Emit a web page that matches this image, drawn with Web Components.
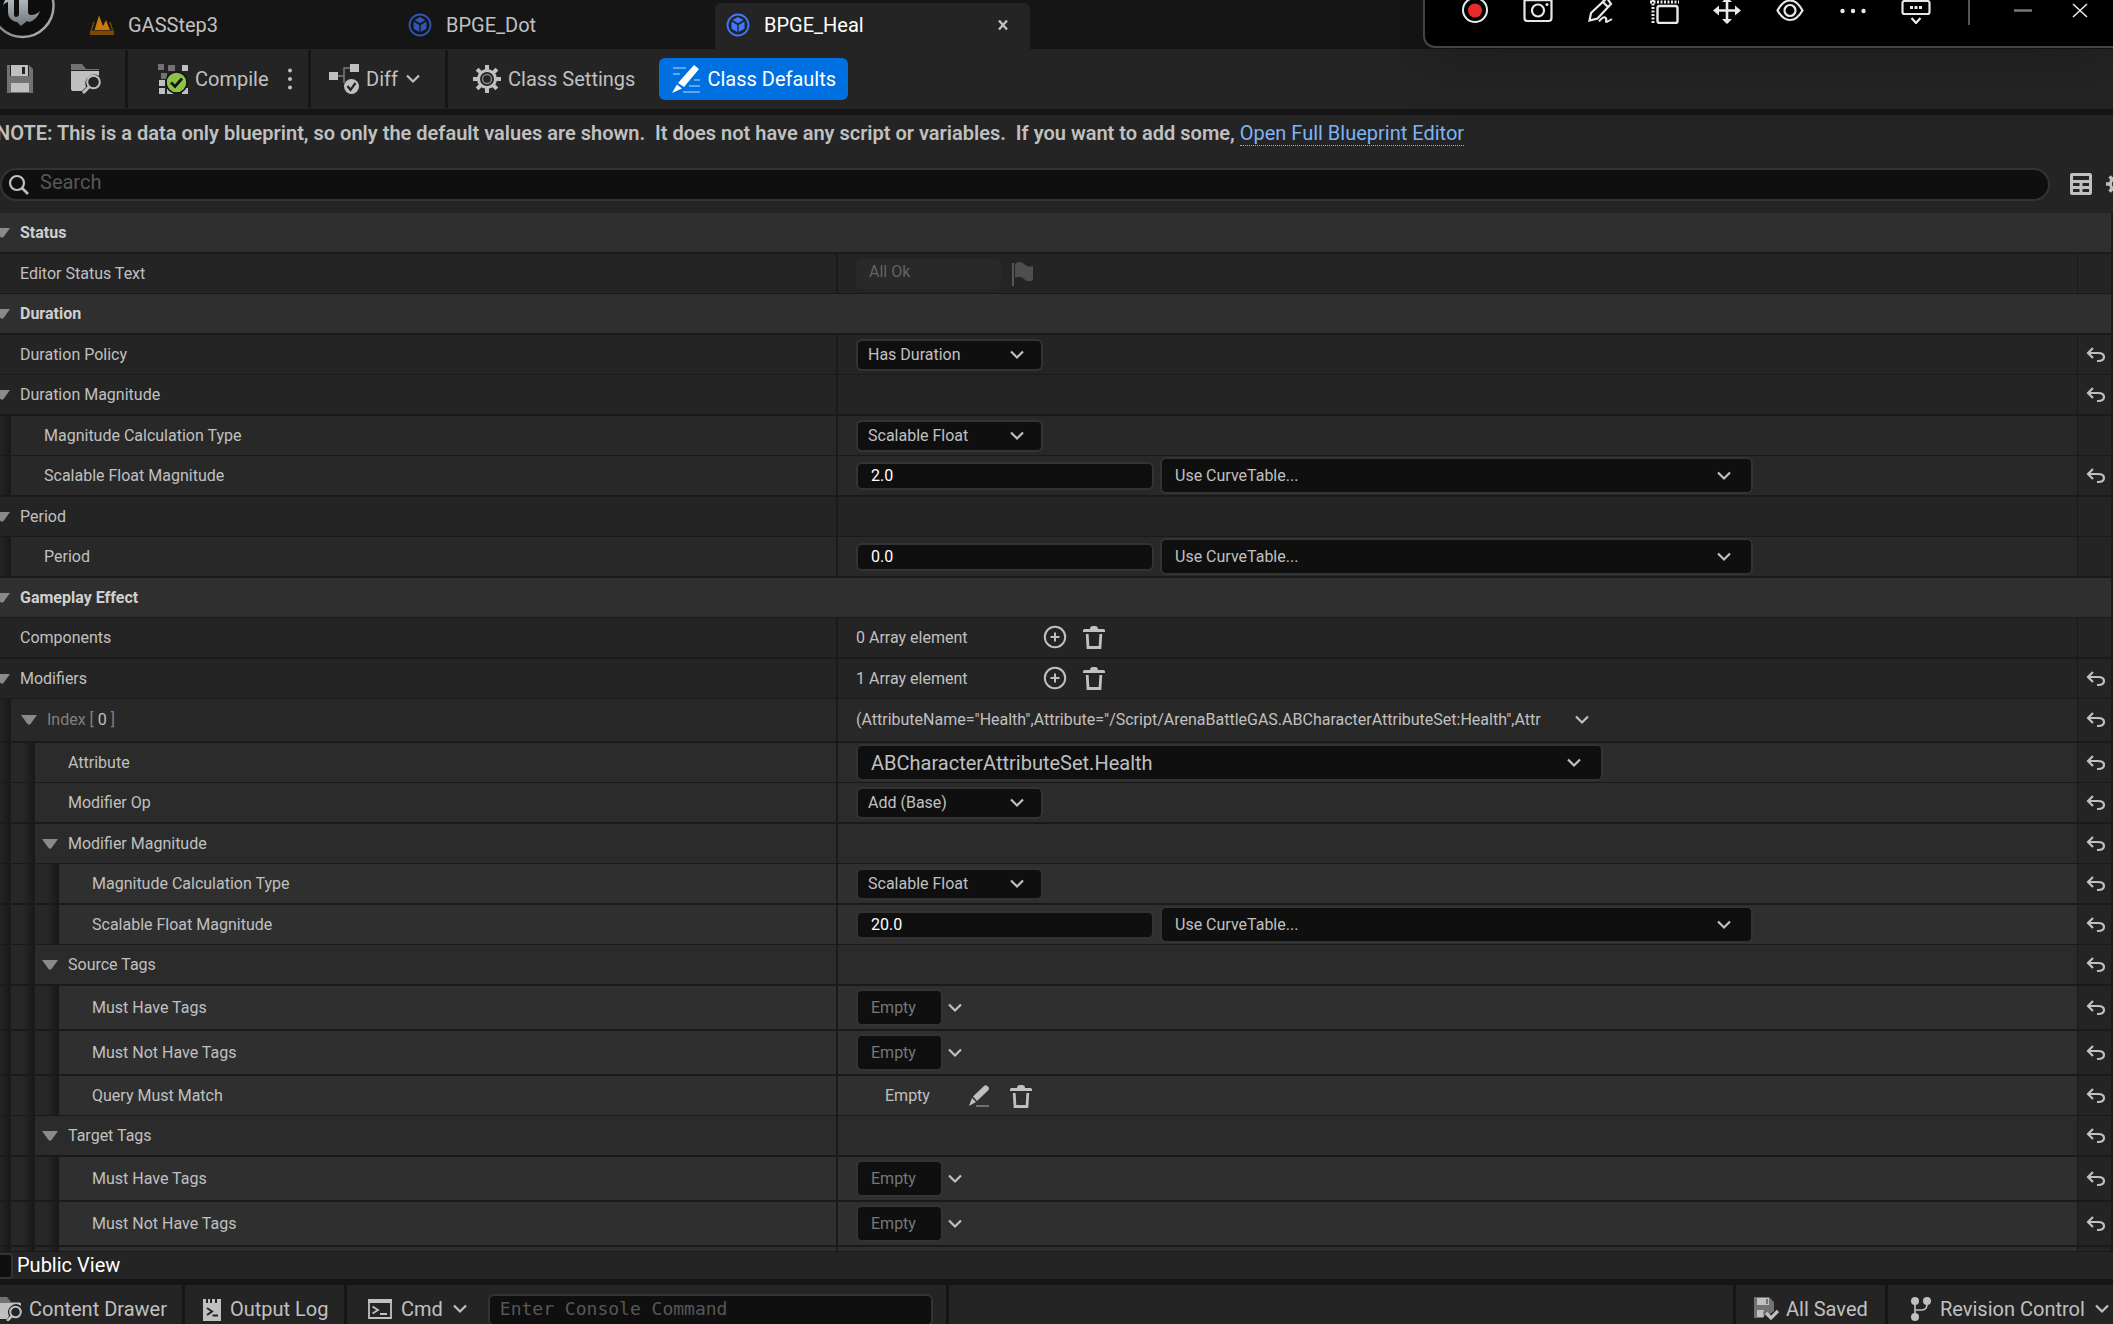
<!DOCTYPE html>
<html lang="en">
<head>
<meta charset="utf-8">
<title>BPGE_Heal</title>
<style>
html, body { margin: 0; height: 100%; background: #151515; overflow: hidden; }
body { font-family: Roboto, "Liberation Sans", sans-serif; font-size: 20px; color: #c0c0c0; }
</style>
</head>
<body>
<blueprint-editor></blueprint-editor>
<script>
const ICONS = {
  logo: ['56 40', `<defs><linearGradient id="rim" x1="0" y1="0" x2="1" y2="1"><stop offset="0" stop-color="#555"/><stop offset="1" stop-color="#b5b8ba"/></linearGradient><linearGradient id="u" x1="0" y1="0" x2="0" y2="1"><stop offset="0" stop-color="#c4c9cc"/><stop offset="1" stop-color="#6f7578"/></linearGradient></defs><circle cx="22.500" cy="6" r="31" fill="#0d0d0d" stroke="url(#rim)" stroke-width="2.500"/><path fill="url(#u)" d="M3 6C4 0 8-6 14-8v22q0 3 2 3t3-2V-8h9v20q0 3 3 3 5 0 9-4-3 9-11 11l-2-1-6 5-4-4q-5-1-7-4-2-2-2-6V2Q4 3 3 6z"/>`],
  level: ['24 20', `<path fill="#c97a08" d="M4.500 15 9 0.500 13 11l3-6 4 10z"/><path fill="#7a4a08" d="M0 15.500h24V20H0z"/><path d="M4 7 1.500 15M20 7l2.500 8" stroke="#7a4a08" stroke-width="1.300"/>`],
  blueprint: ['24 24', `<circle cx="12" cy="12" r="10.500" fill="none" stroke="currentColor" stroke-width="1.800"/><path fill="currentColor" d="M12 4 17.500 7 12 10.300 6.500 7zM5.500 8.600 11.300 12v7L5.500 15.800zM18.500 8.600 12.700 12v7l5.800-3.200z"/>`],
  close: ['12 12', `<path d="M2 1.500 10 10.500M10 1.500 2 10.500" stroke="currentColor" stroke-width="2.400"/>`],
  save: ['26 28', `<path fill="currentColor" d="M0 0h3v11h19V0l4 4v24H0z" opacity=".5"/><path fill="currentColor" fill-rule="evenodd" d="M4 0h17v11H4zm11 2v7h3V2zM4 18h18v9H4z"/>`],
  folder: ['30 30', `<path fill="currentColor" opacity=".5" d="M0 0h11l4 5h13v1H0z"/><path fill="currentColor" d="M0 7h28v5a9 9 0 0 0-13 11l-4 4H2q-2 0-2-2z"/><circle cx="22.500" cy="18" r="6.300" fill="none" stroke="currentColor" stroke-width="2"/><path d="M18 23 12 29" stroke="currentColor" stroke-width="3"/>`],
  drawer: ['22 24', `<path fill="currentColor" opacity=".5" d="M0 0h7l4 5h9v1H0z"/><path fill="currentColor" d="M0 6h21v3a8 8 0 0 0-12 10l-2 3H0z"/><circle cx="15.500" cy="15" r="5.300" fill="none" stroke="currentColor" stroke-width="2"/><path d="M12 19 7 24" stroke="currentColor" stroke-width="2.500"/>`],
  compile: ['30 30', `<g fill="#c0c0c0"><path d="M24 1h6v6h-6zM1 16h6v6H1zM1 24h6v6H1zM9 24h6v6H9zM24 24h6v6h-6z"/><path opacity=".5" d="M0 0h6v6H0zM10 1h7v6h-7zM3 9h6v6H3z"/></g><circle cx="18.500" cy="18.500" r="10.500" fill="#8bc34a" stroke="#151515" stroke-width="1.500"/><path d="M13 18.500l4 4 7-8" fill="none" stroke="#151515" stroke-width="2.800"/>`],
  dots: ['4 22', `<g fill="currentColor"><circle cx="2" cy="2.500" r="2"/><circle cx="2" cy="11" r="2"/><circle cx="2" cy="19.500" r="2"/></g>`],
  diff: ['30 30', `<path d="M8 12h7V4h7M15 12v7" fill="none" stroke="currentColor" opacity=".55" stroke-width="1.500"/><path fill="currentColor" d="M0 8h9v8H0zM21 0h9v8h-9z"/><circle cx="22.500" cy="22.500" r="7.500" fill="currentColor"/><path d="M18.500 22l3 4 5-7" fill="none" stroke="#242424" stroke-width="2.200"/>`],
  chev: ['16 10', `<path d="M2 1.500 8 7.500 14 1.500" fill="none" stroke="currentColor" stroke-width="2.200"/>`],
  gear: ['28 28', `<circle cx="14" cy="14" r="8.500" fill="none" stroke="currentColor" stroke-width="3"/><circle cx="14" cy="14" r="4.500" fill="none" stroke="currentColor" stroke-width="1.500" opacity=".6"/><g stroke="currentColor" stroke-width="4"><path d="M14 0v5M14 23v5M0 14h5M23 14h5M4.100 4.100 7.600 7.600M20.400 20.400l3.500 3.500M23.900 4.100 20.400 7.600M7.600 20.400l-3.500 3.500"/></g>`],
  gearsmall: ['22 22', `<circle cx="11" cy="11" r="6.500" fill="none" stroke="currentColor" stroke-width="3"/><path d="M11 0v4M11 18v4M0 11h4M18 11h4M3.500 3.500l2.500 2.500M16 16l2.500 2.500M18.500 3.500 16 6M6 16l-2.500 2.500" stroke="currentColor" stroke-width="3.400"/>`],
  defaults: ['28 28', `<g stroke="#7db8f5" stroke-width="1.500"><path d="M1 3h13M1 9h7M22 15h6M17 21h11M11 27h17"/></g><path fill="#fff" d="M22 0l5 4L12 22l-6-4zM5 19.500l5 4L0 28z"/>`],
  search: ['22 22', `<circle cx="9" cy="9" r="7" fill="none" stroke="currentColor" stroke-width="2.200"/><path d="M14 14l6 6" stroke="currentColor" stroke-width="2.600"/>`],
  grid: ['22 22', `<path fill="currentColor" fill-rule="evenodd" d="M2 0h18q2 0 2 2v18q0 2-2 2H2q-2 0-2-2V2Q0 0 2 0zM3 3v4h16V3zM3 10v3h6.500v-3zM12.500 10v3H19v-3zM3 16v3h6.500v-3zM12.500 16v3H19v-3z"/>`],
  flag: ['22 24', `<path d="M1 1v23" stroke="currentColor" stroke-width="1.800"/><path fill="currentColor" d="M3 2Q8-2 12 2t9 2v14q-5 3-9-1T3 16z" opacity=".75"/>`],
  plus: ['24 24', `<circle cx="12" cy="12" r="10.200" fill="none" stroke="currentColor" stroke-width="2"/><path d="M12 7.500v9M7.500 12h9" stroke="currentColor" stroke-width="2"/>`],
  trash: ['22 24', `<path fill="currentColor" d="M0 5.500Q0 4 1.500 4H7Q7 1 10 1h2q3 0 3 3h5.500Q22 4 22 5.500V7H0z"/><path d="M4.200 9 5 22.500h12L17.800 9" fill="none" stroke="currentColor" stroke-width="2.800"/>`],
  pencil: ['22 22', `<path fill="currentColor" d="M16 1q2-1.500 4 .5t0 4L9 16l-4-4.500zM4 13l4 4-7 4z"/><path d="M8 21h13" stroke="currentColor" opacity=".6" stroke-width="1.500"/>`],
  reset: ['20 16', `<path d="M7 1 2 6l5 5M2 6h10q6 0 6 4T12 14h-1" fill="none" stroke="currentColor" stroke-width="2.200"/>`],
  arrow: ['16 10', `<path fill="#8a8a8a" d="M0 0h16L9.500 9q-1.500 1.500-3 0z"/>`],
  log: ['18 24', `<path fill="currentColor" d="M0 2h3v4h2V2h2v4h2V2h3v4h2V2h4v22H0z"/><path d="M4 11l5 3.500L4 18M9.500 18.500H15" fill="none" stroke="#242424" stroke-width="2"/>`],
  cmd: ['24 20', `<path fill="currentColor" d="M0 0h24v4H0z"/><path d="M1 1h22v18H1z" fill="none" stroke="currentColor" stroke-width="1.800"/><path d="M4.500 7.500 10 11l-5.500 3.500M12 15h7" fill="none" stroke="currentColor" stroke-width="1.800"/>`],
  saved: ['25 24', `<path fill="currentColor" opacity=".5" d="M0 0h15l5 5v9l-5 4-3-2-3 5H0z"/><path fill="currentColor" fill-rule="evenodd" d="M3 1h12v7H3zm9 1v5h2V2zM3 13h7l-1 3 1 4H3z"/><path d="M12 16l5 5 7-7" fill="none" stroke="currentColor" stroke-width="3.200"/>`],
  branch: ['20 24', `<g fill="currentColor"><circle cx="4" cy="4" r="4"/><circle cx="16" cy="4" r="4"/><circle cx="4" cy="20" r="4"/></g><path d="M4 5v14M4 13h7q5 0 5-6" fill="none" stroke="currentColor" stroke-width="1.600"/>`],
  record: ['28 24', `<circle cx="14" cy="10" r="12" fill="none" stroke="#e8e8e8" stroke-width="2"/><circle cx="14" cy="10.500" r="7" fill="#e82a2a"/>`],
  camera: ['30 24', `<path d="M1.500 0v18q0 3 3 3h21q3 0 3-3V0" fill="none" stroke="currentColor" stroke-width="2.200"/><path d="M2 .500h26" stroke="currentColor" stroke-width="1.500"/><circle cx="15" cy="10.500" r="6" fill="none" stroke="currentColor" stroke-width="2.200"/><circle cx="24" cy="4.500" r="1.500" fill="currentColor"/>`],
  draw: ['28 24', `<path d="M20-2 4 13 2.500 20.500l8-2L24 4 20-2M15 1l6 6" fill="none" stroke="currentColor" stroke-width="2.200"/><path d="M12 21.500q4-5 6-4t1 3.500 6-2" fill="none" stroke="currentColor" stroke-width="2"/>`],
  crop: ['30 24', `<path d="M1 2h29M4 0v24" fill="none" stroke="currentColor" stroke-width="3" stroke-dasharray="2 1.500"/><rect x="8.500" y="6" width="20" height="17" rx="2" fill="#000" stroke="currentColor" stroke-width="2.400"/>`],
  move: ['28 24', `<path d="M14-2v25M2 10.500h24" stroke="currentColor" stroke-width="2.600"/><path fill="currentColor" d="M9 19h10l-5 5zM9 2h10l-5-5zM6 5.500v10L0 10.500zM22 5.500v10l6-5z"/>`],
  eye: ['28 24', `<path d="M1.500 10.500Q7 .500 14 .500t12.500 10Q21 20 14 20T1.500 10.500z" fill="none" stroke="currentColor" stroke-width="2.200"/><circle cx="14" cy="10.500" r="5.500" fill="none" stroke="currentColor" stroke-width="2.200"/>`],
  more: ['28 24', `<g fill="currentColor"><circle cx="3.500" cy="11" r="2.200"/><circle cx="14" cy="11" r="2.200"/><circle cx="24.500" cy="11" r="2.200"/></g>`],
  keys: ['30 24', `<rect x="1.500" y="1" width="27" height="13" rx="2" fill="none" stroke="currentColor" stroke-width="2.200"/><g fill="currentColor"><path d="M9 6h3v3H9zM13.500 6h3v3h-3zM18 6h3v3h-3z"/></g><path d="M10.500 18l4.500 5 4.500-5" fill="none" stroke="currentColor" stroke-width="2.200"/>`],
  minus: ['20 24', `<path d="M1 10.500h18" stroke="#777" stroke-width="2.500"/>`],
  cross: ['16 24', `<path d="M1 4l14 13M15 4 1 17" stroke="currentColor" stroke-width="1.600"/>`]
};
const icon = n => `<ue-icon name="${n}"></ue-icon>`;

class UeIcon extends HTMLElement {
  connectedCallback() {
    const [size, body] = ICONS[this.getAttribute('name')];
    const [w, h] = size.split(' ');
    this.attachShadow({ mode: 'open' }).innerHTML =
      `<style>:host{display:inline-flex;flex:none}svg{display:block}</style><svg width="${w}" height="${h}" viewBox="0 0 ${w} ${h}" aria-hidden="true">${body}</svg>`;
  }
}
customElements.define('ue-icon', UeIcon);

const define = (name, html) => {
  const t = document.createElement('template');
  customElements.define(name, class extends HTMLElement {
    constructor() {
      super();
      if (!t.innerHTML) t.innerHTML = html;
      this.attachShadow({ mode: 'open' }).append(document.importNode(t.content, true));
    }
  });
};

define('editor-tab', `<style>
:host{display:block;width:315px}
button{display:flex;align-items:center;gap:14px;width:100%;height:46px;padding:0 21px 2px 11px;border:0;border-radius:6px 6px 0 0;background:none;color:inherit;font:inherit;text-align:left}
:host([active]) button{background:#242424;color:#fff}
.t{flex:1}
slot[name=close]{color:#c0c0c0}
</style><button type="button"><slot name="icon"></slot><span class="t"><slot></slot></span><slot name="close"></slot></button>`);

define('tool-button', `<style>
:host{display:block}
button{display:flex;align-items:center;gap:7px;height:42px;padding:0;border:0;border-radius:6px;background:none;color:inherit;font:inherit;white-space:nowrap}
:host([primary]) button{background:#0070e0;color:#fff;padding:0 12px 0 13px}
:host([wide]) button{gap:9px}
.t{display:contents}
</style><button type="button"><slot></slot></button>`);

define('bar-group', `<style>
:host{display:flex;align-items:center;box-sizing:border-box;border-right:3px solid #161616}
:host([last]){border-right:0}
</style><slot></slot>`);

define('capture-bar', `<style>
:host{position:absolute;top:0;right:0;display:flex;align-items:flex-start;box-sizing:border-box;height:48px;padding:0 5px 0 18px;background:#000;border:solid #444;border-width:0 0 2px 2px;border-radius:0 0 0 12px;box-shadow:0 0 64px rgba(0,0,0,.35);color:#e8e8e8}
button{display:flex;justify-content:center;width:63px;padding:0;border:0;background:none;color:inherit}
i{width:2px;height:25px;background:#555;margin:0 24px 0 21px}
i~button{width:57px}
</style>
${[['record','Record'],['camera','Capture'],['draw','Draw'],['crop','Select area'],['move','Move'],['eye','Show'],['more','More'],['keys','Dock']].map(b => `<button type="button" aria-label="${b[1]}">${icon(b[0])}</button>`).join('')}<i></i><button type="button" aria-label="Minimize">${icon('minus')}</button><button type="button" aria-label="Close">${icon('cross')}</button>`);

class DetailRow extends HTMLElement {
  connectedCallback() {
    const a = n => this.getAttribute(n);
    const depth = +(a('depth') || 0), kind = a('kind') || '', value = a('value') || '';
    const sel = (cls, v, id) => `<span class="sel ${cls}"><select ${id ? 'id="c"' : 'aria-label="Curve table"'}><option>${v}</option></select>${icon('chev')}</span>`;
    const btn = (n, l) => `<button type="button" aria-label="${l}">${icon(n)}</button>`;
    const views = {
      status: () => `<input id="c" class="ro" value="${value}" disabled><span class="flag">${icon('flag')}</span>`,
      select: () => sel('short', value, true),
      attr: () => sel('attr', value, true),
      number: () => `<input id="c" class="num" value="${value}">${sel('curve', 'Use CurveTable...', false)}`,
      array: () => `<span class="count">${value}</span>${btn('plus', 'Add element')}${btn('trash', 'Remove all')}`,
      struct: () => `<span class="struct"><slot></slot></span>${btn('chev', 'Element options')}`,
      tags: () => `<button id="c" type="button" class="empty">Empty</button>${btn('chev', 'Edit tags')}`,
      query: () => `<span class="q">Empty</span>${btn('pencil', 'Edit query')}${btn('trash', 'Clear query')}`
    };
    const tied = /status|select|attr|number|tags/.test(kind);
    const text = kind === 'struct' ? `<span class="idx">Index [ <b>0</b> ]</span>` : a('label');
    this.attachShadow({ mode: 'open' }).innerHTML = `<style>
:host{display:grid;grid-template-columns:836fr 1242fr 33px;min-height:39px;border-bottom:1px solid #1a1a1a;font-size:16px;line-height:20px;--bg:${['#242424', '#282828', '#2b2b2b', '#2f2f2f'][depth]};background:#242424}
:host(:nth-child(odd)),:host([kind=tags]){border-bottom-width:2px}
:host([kind=struct]){min-height:42px}
:host([kind=tags]){min-height:43px}
:host([head]){--bg:#2f2f2f;display:flex;font-weight:700;color:#d0d0d0}
:host([head]) .name{flex:1}
:host([head]) .val,:host([head]) .rst{display:none}
.name{display:flex;align-items:stretch;background:var(--bg);min-width:0}
.g{flex:none;width:24px;background:linear-gradient(90deg,transparent 50%,#1a1a1a 90%),#272727}
.g:first-child{width:11px;background:linear-gradient(90deg,#242424,#1a1a1a 80%)}
.fold{display:flex;align-items:center;justify-content:flex-end;flex:none;width:${depth ? 23 : 10}px;margin-right:10px;padding:0;border:0;background:none}
:host([kind=struct]) .fold{width:26px}
label,.lbl{display:flex;align-items:center}
.idx{color:#808080;white-space:pre}.idx b{font-weight:400;color:#c0c0c0}
.val{display:flex;align-items:center;background:var(--bg);border-left:2px solid #1a1a1a;border-right:1px solid #1a1a1a;padding-left:18px;min-width:0}
.rst{display:flex;align-items:center;justify-content:center;padding:0 0 0 2px;border:0;background:none;color:#c0c0c0}
.val button{display:flex;padding:0;border:0;background:none;color:#c0c0c0}
input,select,.val .empty{box-sizing:border-box;border:2px solid #333;border-radius:6px;background:#0f0f0f;color:#c0c0c0;font:inherit;line-height:20px}
.num{width:298px;height:28px;padding:0 13px;color:#fff;margin-right:6px}
.ro{width:145px;height:30px;padding:0 11px 4px;border-color:#292929;background:#292929;color:#636363}
.flag{display:flex;margin-left:11px;color:#5c5c5c}
.sel{display:grid;align-items:center;flex:none}
.sel>*{grid-area:1/1}
.sel ue-icon{justify-self:end;pointer-events:none}
select{width:100%;height:37px;padding:0 13px;appearance:none}
.short{width:187px}.short select{height:32px;padding:0 10px}.short ue-icon{margin-right:18px}
.curve{width:593px}.curve ue-icon{margin-right:21px}
.attr{width:747px;font-size:20px}.attr ue-icon{margin-right:21px}
.count{width:187px}.count+button{margin-right:16px}.val .count~button{padding-bottom:1px}
.struct{width:688px;white-space:nowrap;overflow:hidden;margin-right:30px}
.val .empty{width:87px;height:37px;padding:0 0 0 13px;align-items:center;color:#777;margin-right:4px}
.q{padding-left:29px;width:83px}.q+button{margin-right:20px}
</style><div class="name">${'<span class="g"></span>'.repeat(depth)}<button class="fold" type="button" aria-label="Expand" ${this.hasAttribute('fold') ? '' : 'tabindex="-1"'}>${this.hasAttribute('fold') ? icon('arrow') : ''}</button>${tied ? `<label for="c">${text}</label>` : `<span class="lbl">${text}</span>`}</div><div class="val">${kind ? views[kind]() : ''}</div>${this.hasAttribute('reset') ? `<button class="rst" type="button" aria-label="Reset to default">${icon('reset')}</button>` : '<span class="rst"></span>'}`;
  }
}
customElements.define('detail-row', DetailRow);

define('details-panel', `<style>
:host{display:block;flex:1 1 0;min-height:0;overflow:hidden;padding-right:2px;background:#1a1a1a;border-bottom:1px solid #1a1a1a}
</style><div>
<detail-row head fold label="Status"></detail-row>
<detail-row label="Editor Status Text" kind="status" value="All Ok"></detail-row>
<detail-row head fold label="Duration"></detail-row>
<detail-row label="Duration Policy" kind="select" value="Has Duration" reset></detail-row>
<detail-row fold label="Duration Magnitude" reset></detail-row>
<detail-row depth="1" label="Magnitude Calculation Type" kind="select" value="Scalable Float"></detail-row>
<detail-row depth="1" label="Scalable Float Magnitude" kind="number" value="2.0" reset></detail-row>
<detail-row fold label="Period"></detail-row>
<detail-row depth="1" label="Period" kind="number" value="0.0"></detail-row>
<detail-row head fold label="Gameplay Effect"></detail-row>
<detail-row label="Components" kind="array" value="0 Array element"></detail-row>
<detail-row fold label="Modifiers" kind="array" value="1 Array element" reset></detail-row>
<detail-row depth="1" fold kind="struct" reset>(AttributeName="Health",Attribute="/Script/ArenaBattleGAS.ABCharacterAttributeSet:Health",Attr</detail-row>
<detail-row depth="2" label="Attribute" kind="attr" value="ABCharacterAttributeSet.Health" reset></detail-row>
<detail-row depth="2" label="Modifier Op" kind="select" value="Add (Base)" reset></detail-row>
<detail-row depth="2" fold label="Modifier Magnitude" reset></detail-row>
<detail-row depth="3" label="Magnitude Calculation Type" kind="select" value="Scalable Float" reset></detail-row>
<detail-row depth="3" label="Scalable Float Magnitude" kind="number" value="20.0" reset></detail-row>
<detail-row depth="2" fold label="Source Tags" reset></detail-row>
<detail-row depth="3" label="Must Have Tags" kind="tags" reset></detail-row>
<detail-row depth="3" label="Must Not Have Tags" kind="tags" reset></detail-row>
<detail-row depth="3" label="Query Must Match" kind="query" reset></detail-row>
<detail-row depth="2" fold label="Target Tags" reset></detail-row>
<detail-row depth="3" label="Must Have Tags" kind="tags" reset></detail-row>
<detail-row depth="3" label="Must Not Have Tags" kind="tags" reset></detail-row>
<detail-row depth="3" label=""></detail-row>
</div>`);

define('status-bar', `<style>
:host{display:flex;flex:none;height:39px;overflow:hidden;background:#242424;border-top:6px solid #151515}
bar-group{align-items:flex-start;padding-top:3px}
.drawer{width:185px}.log{width:162px;padding-left:18px}.cmd{width:602px;padding-left:21px}
.fill{flex:1}.saved{width:152px;padding-left:18px}.rev{width:225px;padding-left:23px}
input{box-sizing:border-box;flex:1;min-width:0;height:32px;margin:6px 13px 0 20px;padding:0 10px 3px;border:2px solid #333;border-radius:6px;background:#0f0f0f;color:#c0c0c0;font:18px "DejaVu Sans Mono","Liberation Mono",monospace}
input::placeholder{color:#575757;opacity:1}
</style>
<bar-group class="drawer"><tool-button>${icon('drawer')}Content Drawer</tool-button></bar-group>
<bar-group class="log"><tool-button wide>${icon('log')}Output Log</tool-button></bar-group>
<bar-group class="cmd"><tool-button wide>${icon('cmd')}Cmd${icon('chev')}</tool-button><input aria-label="Console command" placeholder="Enter Console Command"></bar-group>
<bar-group class="fill"></bar-group>
<bar-group class="saved"><tool-button>${icon('saved')}All Saved</tool-button></bar-group>
<bar-group class="rev" last><tool-button wide>${icon('branch')}Revision Control${icon('chev')}</tool-button></bar-group>`);

define('blueprint-editor', `<style>
:host{display:flex;flex-direction:column;height:100vh;background:#242424;line-height:24px}
.tabs{display:flex;align-items:flex-end;gap:3px;height:49px;flex:none;background:#151515}
.tabs>ue-icon{align-self:flex-start;width:76px}
.dim{color:#2f55b5}.lit{color:#3d78ff}
.tools{display:flex;height:58px;flex:none;padding:1px 0;border-bottom:6px solid #151515}
.files{width:128px;padding-left:7px;gap:38px}
.compile{width:183px;padding-left:30px;gap:19px}
.diff{width:137px;padding-left:18px}
.cls{padding-left:25px;gap:24px}
.note{margin:0 0 0 -4px;padding:6px 0;white-space:pre;font-weight:600;flex:none}
.note a{font-weight:400;color:#7db4f5;text-decoration:none;border-bottom:1px dotted #7db4f5}
.find{display:flex;align-items:center;flex:none;margin:17px 0 12px}
.box{display:flex;align-items:center;flex:1;box-sizing:border-box;height:33px;padding:0 7px 0 6px;gap:10px;border:2px solid #333;border-radius:17px;background:#0f0f0f}
.box input{flex:1;border:0;padding:0 0 5px;background:none;color:#c0c0c0;font:inherit;line-height:24px;outline:0}
.box input::placeholder{color:#575757;opacity:1}
.find button{display:flex;padding:0 0 2px;border:0;background:none;color:#c0c0c0}
.view{margin-left:20px}.set{margin-left:14px;width:7px;overflow:hidden}
.public{display:flex;align-items:center;flex:none;height:27px;color:#fff}
.public label{padding-bottom:2px}
.public input{appearance:none;box-sizing:border-box;flex:none;width:26px;height:26px;margin:0 4px 0 -13px;border:2px solid #333;border-radius:4px;background:#0f0f0f}
</style>
<nav class="tabs">${icon('logo')}
<editor-tab><ue-icon slot="icon" name="level"></ue-icon>GASStep3</editor-tab>
<editor-tab><ue-icon slot="icon" name="blueprint" class="dim"></ue-icon>BPGE_Dot</editor-tab>
<editor-tab active><ue-icon slot="icon" name="blueprint" class="lit"></ue-icon>BPGE_Heal<ue-icon slot="close" name="close"></ue-icon></editor-tab>
</nav>
<div class="tools">
<bar-group class="files"><tool-button aria-label="Save">${icon('save')}</tool-button><tool-button aria-label="Browse">${icon('folder')}</tool-button></bar-group>
<bar-group class="compile"><tool-button>${icon('compile')}Compile</tool-button><tool-button aria-label="Compile options">${icon('dots')}</tool-button></bar-group>
<bar-group class="diff"><tool-button>${icon('diff')}Diff${icon('chev')}</tool-button></bar-group>
<bar-group class="cls" last><tool-button>${icon('gear')}Class Settings</tool-button><tool-button primary>${icon('defaults')}Class Defaults</tool-button></bar-group>
</div>
<p class="note">NOTE: This is a data only blueprint, so only the default values are shown.  It does not have any script or variables.  If you want to add some, <a href="#full">Open Full Blueprint Editor</a></p>
<div class="find"><div class="box">${icon('search')}<input type="text" aria-label="Search" placeholder="Search"></div><button class="view" type="button" aria-label="Table view">${icon('grid')}</button><button class="set" type="button" aria-label="Settings">${icon('gearsmall')}</button></div>
<details-panel></details-panel>
<div class="public"><input id="pub" type="checkbox"><label for="pub">Public View</label></div>
<status-bar></status-bar>
<capture-bar></capture-bar>`);
</script>
</body>
</html>
